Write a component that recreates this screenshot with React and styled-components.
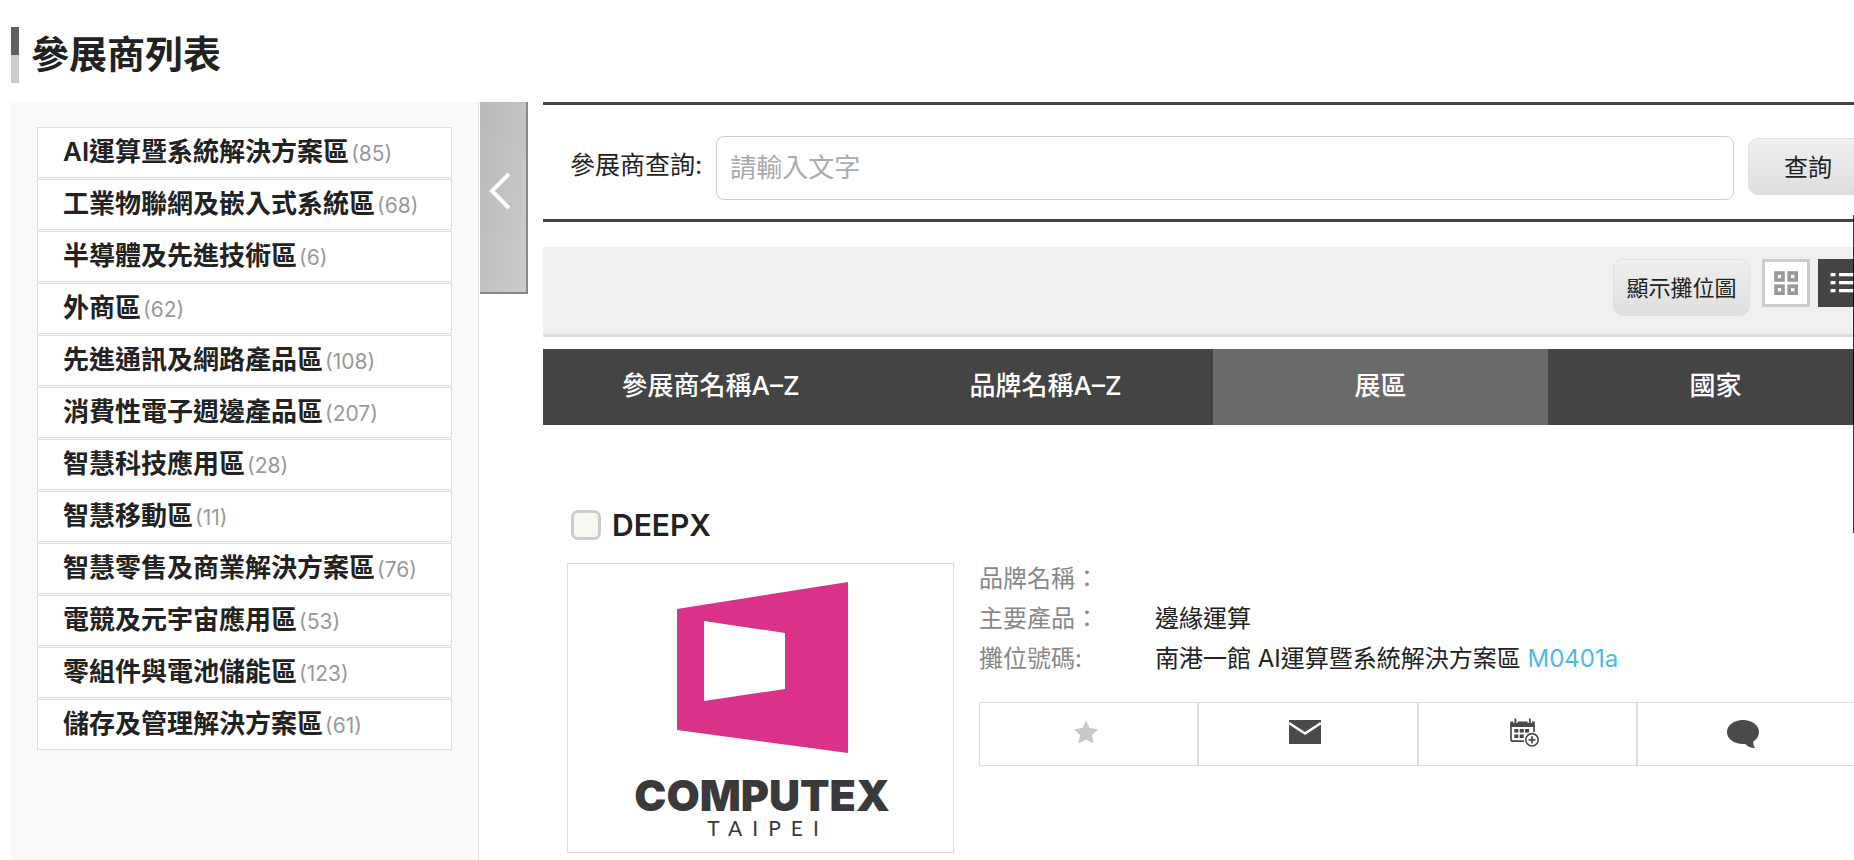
import React, { useState } from "react";
import styled, { createGlobalStyle } from "styled-components";

const zones = [
  { name: "AI運算暨系統解決方案區", count: 85 },
  { name: "工業物聯網及嵌入式系統區", count: 68 },
  { name: "半導體及先進技術區", count: 6 },
  { name: "外商區", count: 62 },
  { name: "先進通訊及網路產品區", count: 108 },
  { name: "消費性電子週邊產品區", count: 207 },
  { name: "智慧科技應用區", count: 28 },
  { name: "智慧移動區", count: 11 },
  { name: "智慧零售及商業解決方案區", count: 76 },
  { name: "電競及元宇宙應用區", count: 53 },
  { name: "零組件與電池儲能區", count: 123 },
  { name: "儲存及管理解決方案區", count: 61 },
];

const tabs = ["參展商名稱A–Z", "品牌名稱A–Z", "展區", "國家"];

// Styled Components
const GlobalStyle = createGlobalStyle`
  * {
    box-sizing: border-box;
  }

  body {
    margin: 0;
    background-color: #fff;
    color: #222;
    font-family: Inter, "Noto Sans CJK TC", sans-serif;
  }

  button,
  input {
    font-family: inherit;
    color: inherit;
  }
`;

const Page = styled.div`
  display: flex;
  flex-direction: column;
  min-height: 100vh;
  padding-left: 11px;
  overflow: hidden;
`;

const PageHeader = styled.header`
  display: flex;
  align-items: center;
  gap: 12px;
  padding: 27px 0 19px;
`;

const TitleBar = styled.span`
  width: 8px;
  height: 56px;
  background: linear-gradient(#606060 50%, #ccc 50%);
`;

const Title = styled.h1`
  margin: 0;
  padding-bottom: 2px;
  font-size: 38px;
  line-height: 54px;
  font-weight: 700;
`;

const Columns = styled.div`
  display: flex;
  flex: 1;
  align-items: stretch;
`;

const Sidebar = styled.aside`
  flex: 0 0 468px;
  padding: 25px 26px;
  border-right: 1px solid #ddd;
  background-color: #f9f9f9;
`;

const ZoneList = styled.ul`
  display: flex;
  flex-direction: column;
  gap: 1px;
  margin: 0;
  padding: 0;
  list-style: none;
`;

const ZoneLink = styled.a`
  display: flex;
  align-items: baseline;
  gap: 2px;
  height: 51px;
  padding: 0 25px;
  border: 1px solid #ddd;
  background-color: #fff;
  color: #222;
  font-size: 26px;
  line-height: 47px;
  font-weight: 600;
  text-decoration: none;
  white-space: nowrap;
`;

const ZoneCount = styled.span`
  color: #999;
  font-size: 21px;
  font-weight: 400;
`;

const CollapseButton = styled.button`
  display: flex;
  flex: 0 0 48px;
  align-self: flex-start;
  align-items: center;
  justify-content: center;
  height: 192px;
  margin-left: 1px;
  padding: 0 6px 12px 0;
  border: 0 solid #888;
  border-width: 0 2px 2px 0;
  background: linear-gradient(100deg, #b8b8b8, #ccc);
  color: #fff;
  cursor: pointer;
`;

/* Runs a little past the right edge of the window */
const Main = styled.main`
  flex: 1;
  min-width: 0;
  margin: 0 -29px 0 15px;
`;

const SearchForm = styled.form`
  display: flex;
  align-items: flex-start;
  gap: 14px;
  height: 120px;
  padding: 31px 15px 0 27px;
  border-top: 3px solid #444;
  border-bottom: 3px solid #444;
`;

const SearchLabel = styled.label`
  flex: 0 0 132px;
  font-size: 25px;
  line-height: 58px;
  white-space: nowrap;
`;

const SearchInput = styled.input`
  flex: 1;
  min-width: 0;
  height: 64px;
  padding: 0 13px 2px;
  border: 1px solid #ccc;
  border-radius: 8px;
  background-color: #fff;
  font-size: 26px;

  &::placeholder {
    color: #aaa;
    opacity: 1;
  }
`;

const GreyButton = styled.button`
  flex: none;
  width: ${({ $width }) => $width};
  height: 57px;
  margin-top: ${({ $top }) => $top || "0"};
  padding: 0 0 3px;
  border: 1px solid #e0e0e0;
  border-radius: 10px;
  background: linear-gradient(#f0f0f0, #dedede);
  font-size: ${({ $size }) => $size};
  white-space: nowrap;
  cursor: pointer;
`;

const Toolbar = styled.div`
  display: flex;
  justify-content: flex-end;
  height: 90px;
  margin-top: 25px;
  padding: 12px 17px 0 0;
  border-bottom: 3px solid #ddd;
  background-color: #f0f0f0;
`;

const ViewButtons = styled.div`
  display: flex;
  gap: 8px;
  margin-left: 12px;
`;

const ViewButton = styled.button`
  width: 48px;
  height: 48px;
  padding: 0;
  border: 3px solid ${({ $active }) => ($active ? "#444" : "#ccc")};
  background-color: ${({ $active }) => ($active ? "#444" : "#fff")};
  cursor: pointer;

  svg {
    display: block;
  }
`;

const TabBar = styled.div`
  display: grid;
  grid-template-columns: repeat(4, 1fr);
  margin-top: 12px;
`;

const Tab = styled.button`
  height: 76px;
  padding: 0 0 8px;
  border: none;
  background-color: ${({ $active }) => ($active ? "#6a6a6a" : "#444")};
  color: #fff;
  font-size: 26px;
  font-weight: 500;
  cursor: pointer;
`;

const Exhibitor = styled.article`
  padding: 80px 27px 6px 24px;
`;

const ExhibitorName = styled.label`
  display: flex;
  align-items: center;
  gap: 11px;
  height: 40px;
  margin-bottom: 18px;
  padding-left: 4px;
  font-size: 30px;
  font-weight: 600;
`;

const Checkbox = styled.input`
  appearance: none;
  width: 30px;
  height: 30px;
  margin: 0;
  border: 3px solid #ccc;
  border-radius: 7px;
  background-color: #f7f7ee;

  &:checked {
    background-color: #444;
  }
`;

const ExhibitorBody = styled.div`
  display: flex;
  align-items: flex-start;
  gap: 25px;
`;

const LogoBox = styled.div`
  flex: 0 0 387px;
  height: 290px;
  border: 1px solid #ddd;

  svg {
    display: block;
  }
`;

const Details = styled.div`
  flex: 1;
  min-width: 0;
`;

const Facts = styled.dl`
  display: grid;
  grid-template-columns: 176px 1fr;
  grid-auto-rows: 40px;
  margin: 0;
  padding-bottom: 19px;
  font-size: 24px;
  line-height: 32px;
`;

const Term = styled.dt`
  color: #888;
`;

const Value = styled.dd`
  margin: 0;
  white-space: nowrap;
`;

const BoothLink = styled.a`
  color: #4db8e8;
  text-decoration: none;
`;

const Actions = styled.div`
  display: grid;
  grid-template-columns: repeat(4, 1fr);
`;

const ActionButton = styled.button`
  display: flex;
  align-items: center;
  justify-content: center;
  height: 64px;
  padding: 0 6px 4px 0;
  border: 1px solid #ddd;
  background-color: #fff;
  cursor: pointer;
`;

/* Thin overlay scrollbar at the window edge */
const ScrollThumb = styled.div`
  position: fixed;
  top: 25vh;
  right: 0;
  width: 1px;
  height: 37vh;
  background-color: rgba(0, 0, 0, 0.8);
`;

// Icons
const ChevronIcon = () => (
  <svg width="22" height="38" viewBox="0 0 22 38" fill="none">
    <path d="M20 2 L3 19 L20 36" stroke="currentColor" strokeWidth="4" />
  </svg>
);

const GridIcon = () => (
  <svg width="42" height="42" viewBox="0 0 42 42" fill="none">
    <g stroke="#999" strokeWidth="3.6">
      <rect x="11" y="11" width="7" height="7" />
      <rect x="24.2" y="11" width="7" height="7" />
      <rect x="11" y="24.2" width="7" height="7" />
      <rect x="24.2" y="24.2" width="7" height="7" />
    </g>
  </svg>
);

const ListIcon = () => (
  <svg width="42" height="42" viewBox="0 0 42 42" fill="#fff">
    <rect x="9.5" y="11" width="5" height="3.3" />
    <rect x="18" y="11" width="16" height="3.3" />
    <rect x="9.5" y="19" width="5" height="3.3" />
    <rect x="18" y="19" width="16" height="3.3" />
    <rect x="9.5" y="27" width="5" height="3.3" />
    <rect x="18" y="27" width="16" height="3.3" />
  </svg>
);

const StarIcon = () => (
  <svg width="24" height="24" viewBox="0 0 24 24">
    <path
      d="M12 0.5 L15.6 8 L24 9.2 L18 15 L19.6 23.5 L12 19.4 L4.4 23.5 L6 15 L0 9.2 L8.4 8 Z"
      fill="#c8c8c8"
    />
  </svg>
);

const MailIcon = () => (
  <svg width="32" height="24" viewBox="0 0 32 24">
    <rect width="32" height="24" fill="#4a4a4a" />
    <path d="M0 3 L16 13.5 L32 3" fill="none" stroke="#fff" strokeWidth="2.6" />
  </svg>
);

const CalendarIcon = () => (
  <svg width="29" height="29" viewBox="0 0 29 29" fill="none">
    <path
      d="M14 23.2 H3 Q1 23.2 1 21.2 V6 M24 7 V14"
      stroke="#4a4a4a"
      strokeWidth="1.7"
    />
    <path d="M0.2 3.5 H24.8 V9 H0.2 Z" fill="#4a4a4a" />
    <path d="M5.4 0.5 V5 M19.8 0.5 V5" stroke="#fff" strokeWidth="4.4" />
    <path d="M5.4 0.5 V5.6 M19.8 0.5 V5.6" stroke="#4a4a4a" strokeWidth="1.8" />
    <g fill="#4a4a4a">
      <rect x="4.3" y="11" width="4" height="3.6" />
      <rect x="9.7" y="11" width="4" height="3.6" />
      <rect x="15.1" y="11" width="4" height="3.6" />
      <rect x="4.3" y="16.4" width="4" height="3.6" />
      <rect x="9.7" y="16.4" width="4" height="3.6" />
    </g>
    <circle cx="22" cy="21.8" r="6.2" fill="#fff" stroke="#4a4a4a" strokeWidth="1.6" />
    <path d="M22 18.3 V25.3 M18.5 21.8 H25.5" stroke="#4a4a4a" strokeWidth="1.8" />
  </svg>
);

const ChatIcon = () => (
  <svg width="32" height="32" viewBox="0 -4 32 32">
    <path
      d="M16 0 C25 0 32 5 32 12 C32 16 29.8 19.3 26.3 21.5 C26 24 26.8 26.3 28 28 C24 28 20.5 26.5 18.3 23.9 C8 24.8 0 19.5 0 12 C0 5 7 0 16 0 Z"
      fill="#4a4a4a"
    />
  </svg>
);

const ExhibitorLogo = () => (
  <svg width="385" height="288" viewBox="0 0 385 288">
    <path
      d="M109 45 L280 18 V189 L109 166 Z M136 57 V137 L217 125 V69 Z"
      fill="#da3189"
      fillRule="evenodd"
    />
    <text
      x="194"
      y="247"
      textAnchor="middle"
      fill="#3a3a3c"
      fontFamily="Inter"
      fontWeight="900"
      fontSize="43"
    >
      COMPUTEX
    </text>
    <text
      x="200"
      y="272"
      textAnchor="middle"
      fill="#3a3a3c"
      fontFamily="Lato"
      fontSize="21"
      letterSpacing="10"
    >
      TAIPEI
    </text>
  </svg>
);

export default function App() {
  const [activeTab, setActiveTab] = useState("展區");
  const [view, setView] = useState("list");

  return (
    <Page>
      <GlobalStyle />
      <PageHeader>
        <TitleBar />
        <Title>參展商列表</Title>
      </PageHeader>

      <Columns>
        <Sidebar>
          <ZoneList>
            {zones.map((zone) => (
              <li key={zone.name}>
                <ZoneLink href="#">
                  {zone.name}
                  <ZoneCount>({zone.count})</ZoneCount>
                </ZoneLink>
              </li>
            ))}
          </ZoneList>
        </Sidebar>
        <CollapseButton type="button" aria-label="收合選單">
          <ChevronIcon />
        </CollapseButton>

        <Main>
          <SearchForm onSubmit={(e) => e.preventDefault()}>
            <SearchLabel htmlFor="keyword">參展商查詢:</SearchLabel>
            <SearchInput id="keyword" type="text" placeholder="請輸入文字" />
            <GreyButton type="submit" $width="120px" $size="24px" $top="2px">
              查詢
            </GreyButton>
          </SearchForm>

          <Toolbar>
            <GreyButton type="button" $width="137px" $size="22px">
              顯示攤位圖
            </GreyButton>
            <ViewButtons>
              <ViewButton
                type="button"
                aria-label="格狀檢視"
                $active={view === "grid"}
                onClick={() => setView("grid")}
              >
                <GridIcon />
              </ViewButton>
              <ViewButton
                type="button"
                aria-label="清單檢視"
                $active={view === "list"}
                onClick={() => setView("list")}
              >
                <ListIcon />
              </ViewButton>
            </ViewButtons>
          </Toolbar>

          <TabBar>
            {tabs.map((tab) => (
              <Tab
                key={tab}
                type="button"
                $active={tab === activeTab}
                onClick={() => setActiveTab(tab)}
              >
                {tab}
              </Tab>
            ))}
          </TabBar>

          <Exhibitor>
            <ExhibitorName>
              <Checkbox type="checkbox" />
              DEEPX
            </ExhibitorName>
            <ExhibitorBody>
              <LogoBox>
                <ExhibitorLogo />
              </LogoBox>
              <Details>
                <Facts>
                  <Term>品牌名稱：</Term>
                  <Value />
                  <Term>主要產品：</Term>
                  <Value>邊緣運算</Value>
                  <Term>攤位號碼:</Term>
                  <Value>
                    南港一館 AI運算暨系統解決方案區{" "}
                    <BoothLink href="#">M0401a</BoothLink>
                  </Value>
                </Facts>
                <Actions>
                  <ActionButton type="button" aria-label="收藏">
                    <StarIcon />
                  </ActionButton>
                  <ActionButton type="button" aria-label="寄信">
                    <MailIcon />
                  </ActionButton>
                  <ActionButton type="button" aria-label="預約">
                    <CalendarIcon />
                  </ActionButton>
                  <ActionButton type="button" aria-label="留言">
                    <ChatIcon />
                  </ActionButton>
                </Actions>
              </Details>
            </ExhibitorBody>
          </Exhibitor>
        </Main>
      </Columns>
      <ScrollThumb />
    </Page>
  );
}
